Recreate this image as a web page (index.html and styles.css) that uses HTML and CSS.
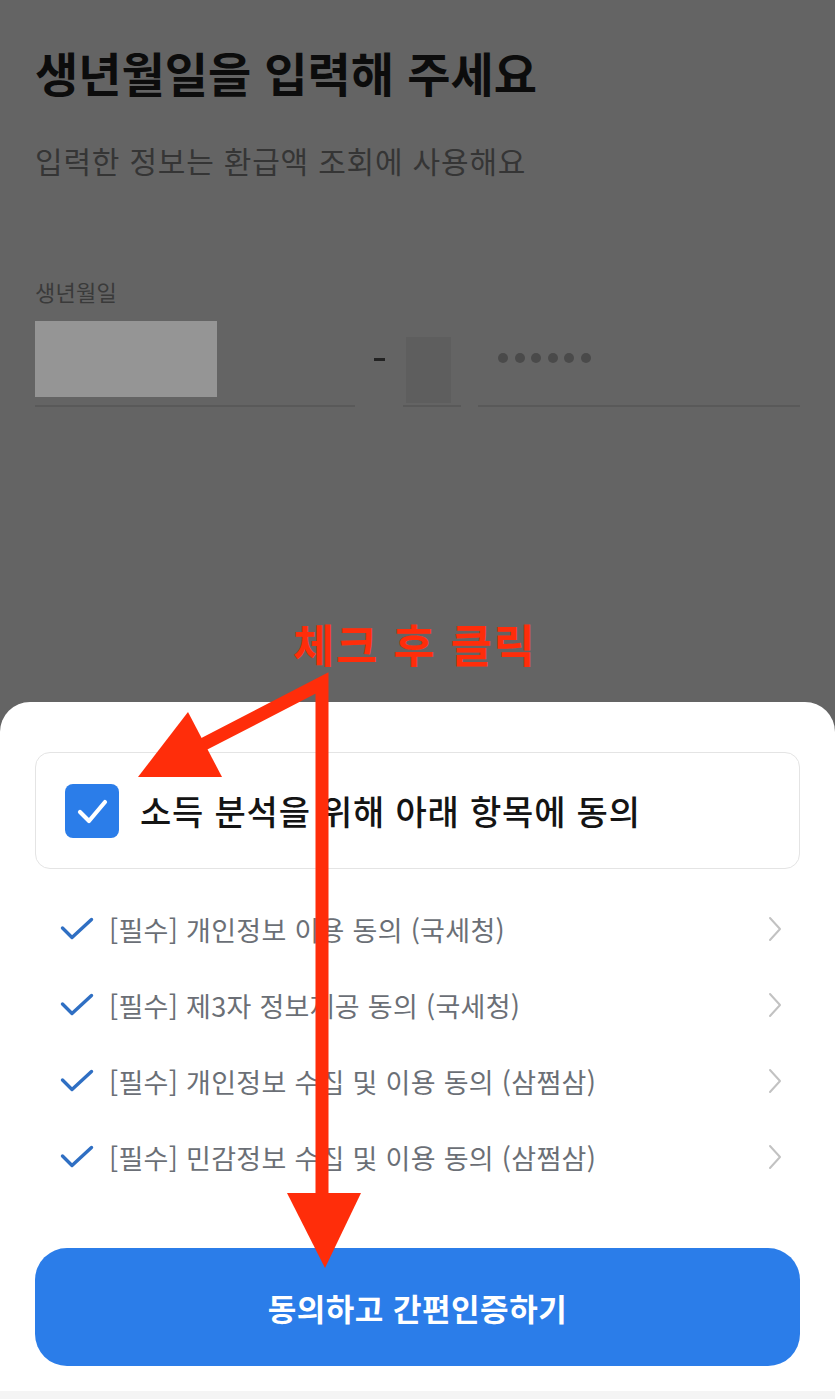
FILE: index.html
```html
<!DOCTYPE html>
<html lang="ko">
<head>
<meta charset="utf-8">
<title>생년월일 입력</title>
<link rel="stylesheet" href="styles.css">
</head>
<body>
<div class="page">
  <section class="top">
    <h1 class="title">생년월일을 입력해 주세요</h1>
    <p class="subtitle">입력한 정보는 환급액 조회에 사용해요</p>
    <div class="label">생년월일</div>
    <div class="field-row">
      <div class="field field-birth"><div class="masked"></div></div>
      <div class="sep"><span class="dash"></span></div>
      <div class="field field-gender"><div class="gender-box"></div></div>
      <div class="field field-rest">
        <div class="dots"><span></span><span></span><span></span><span></span><span></span><span></span></div>
      </div>
    </div>
  </section>

  <section class="sheet">
    <div class="all-agree">
      <span class="checkbox">
        <svg viewBox="0 0 54 54" width="54" height="54"><path d="M15 28 L24 37 L40 18" fill="none" stroke="#fff" stroke-width="4.2" stroke-linecap="round" stroke-linejoin="round"/></svg>
      </span>
      <span class="all-text">소득 분석을 위해 아래 항목에 동의</span>
    </div>
    <ul class="terms">
      <li class="term">
        <svg class="tick" viewBox="0 0 34 24" width="34" height="24"><path d="M2.5 11 L12 20.5 L31.5 2.5" fill="none" stroke="#2f6fc3" stroke-width="3.4" stroke-linecap="round" stroke-linejoin="round"/></svg>
        <span class="term-text">[필수] 개인정보 이용 동의 (국세청)</span>
        <svg class="chev" viewBox="0 0 16 26" width="16" height="26"><path d="M3 2 L13 13 L3 24" fill="none" stroke="#c2c2c2" stroke-width="2" stroke-linecap="round" stroke-linejoin="round"/></svg>
      </li>
      <li class="term">
        <svg class="tick" viewBox="0 0 34 24" width="34" height="24"><path d="M2.5 11 L12 20.5 L31.5 2.5" fill="none" stroke="#2f6fc3" stroke-width="3.4" stroke-linecap="round" stroke-linejoin="round"/></svg>
        <span class="term-text">[필수] 제3자 정보제공 동의 (국세청)</span>
        <svg class="chev" viewBox="0 0 16 26" width="16" height="26"><path d="M3 2 L13 13 L3 24" fill="none" stroke="#c2c2c2" stroke-width="2" stroke-linecap="round" stroke-linejoin="round"/></svg>
      </li>
      <li class="term">
        <svg class="tick" viewBox="0 0 34 24" width="34" height="24"><path d="M2.5 11 L12 20.5 L31.5 2.5" fill="none" stroke="#2f6fc3" stroke-width="3.4" stroke-linecap="round" stroke-linejoin="round"/></svg>
        <span class="term-text">[필수] 개인정보 수집 및 이용 동의 (삼쩜삼)</span>
        <svg class="chev" viewBox="0 0 16 26" width="16" height="26"><path d="M3 2 L13 13 L3 24" fill="none" stroke="#c2c2c2" stroke-width="2" stroke-linecap="round" stroke-linejoin="round"/></svg>
      </li>
      <li class="term">
        <svg class="tick" viewBox="0 0 34 24" width="34" height="24"><path d="M2.5 11 L12 20.5 L31.5 2.5" fill="none" stroke="#2f6fc3" stroke-width="3.4" stroke-linecap="round" stroke-linejoin="round"/></svg>
        <span class="term-text">[필수] 민감정보 수집 및 이용 동의 (삼쩜삼)</span>
        <svg class="chev" viewBox="0 0 16 26" width="16" height="26"><path d="M3 2 L13 13 L3 24" fill="none" stroke="#c2c2c2" stroke-width="2" stroke-linecap="round" stroke-linejoin="round"/></svg>
      </li>
    </ul>
    <button class="cta" type="button">동의하고 간편인증하기</button>
  </section>
  <div class="navbar"></div>

  <div class="note">체크 후 클릭</div>
  <svg class="arrows" viewBox="0 0 835 1399" width="835" height="1399">
    <polyline points="200,746 322,683 322,1200" fill="none" stroke="#ff2d0a" stroke-width="13" stroke-linejoin="miter"/>
    <polygon points="138,777 188,712 222,777" fill="#ff2d0a"/>
    <polygon points="287,1193 361,1193 325,1268" fill="#ff2d0a"/>
  </svg>
</div>
</body>
</html>
```

FILE: styles.css
```css
* { box-sizing: border-box; }

html, body {
  margin: 0;
  padding: 0;
}

body {
  background: #646464;
  font-family: "Noto Sans CJK KR", "Noto Sans", sans-serif;
}

.page {
  position: relative;
  width: 835px;
  height: 1399px;
  display: flex;
  flex-direction: column;
  overflow: hidden;
}

/* ---------- top (dimmed) ---------- */
.top {
  flex: 1;
  padding: 44px 35px 0;
}

.title {
  margin: 0;
  font-size: 47px;
  line-height: 56px;
  font-weight: 700;
  color: #0c0c0c;
  letter-spacing: 0;
}

.subtitle {
  margin: 42px 0 0;
  font-size: 30px;
  line-height: 36px;
  font-weight: 400;
  color: #353535;
  letter-spacing: 0.8px;
}

.label {
  margin-top: 99px;
  font-size: 22px;
  line-height: 28px;
  color: #3a3a3a;
  letter-spacing: 0.3px;
}

.field-row {
  margin-top: 16px;
  display: flex;
  height: 86px;
}

.field {
  border-bottom: 2px solid #595959;
}

.field-birth {
  width: 320px;
}

.masked {
  width: 182px;
  height: 76px;
  background: #959595;
}

.sep {
  width: 48px;
  display: flex;
  justify-content: center;
  padding-top: 37px;
}

.dash {
  width: 11px;
  height: 3px;
  background: #222;
}

.field-gender {
  width: 58px;
  padding: 16px 0 0 3px;
}

.gender-box {
  width: 45px;
  height: 66px;
  background: #5e5e5e;
}

.field-rest {
  flex: 1;
  margin-left: 17px;
  padding: 32px 0 0 20px;
}

.dots {
  display: flex;
  gap: 6.6px;
}

.dots span {
  width: 10px;
  height: 10px;
  border-radius: 50%;
  background: #4a4a4a;
}

/* ---------- bottom sheet ---------- */
.sheet {
  background: #fff;
  border-radius: 30px 30px 0 0;
  padding: 50px 35px 25px;
}

.all-agree {
  height: 117px;
  border: 1.5px solid #e4e4e4;
  border-radius: 15px;
  display: flex;
  align-items: center;
  padding-left: 29px;
  gap: 21px;
}

.checkbox {
  width: 54px;
  height: 54px;
  border-radius: 8px;
  background: #2b7de9;
  display: flex;
}

.all-text {
  font-size: 34px;
  font-weight: 500;
  color: #141414;
  letter-spacing: 0.8px;
}

.terms {
  list-style: none;
  margin: 22px 0 0;
  padding: 0;
}

.term {
  height: 76px;
  display: flex;
  align-items: center;
  padding: 0 17px 0 25px;
}

.tick {
  flex: none;
}

.term-text {
  flex: 1;
  margin-left: 15px;
  font-size: 27px;
  color: #6b6f76;
  letter-spacing: 0.3px;
}

.chev {
  flex: none;
}

.cta {
  display: block;
  width: 100%;
  height: 118px;
  margin-top: 53px;
  border: 0;
  border-radius: 32px;
  background: #2b7de9;
  color: #fff;
  font-family: inherit;
  font-size: 31px;
  font-weight: 700;
  letter-spacing: 0.5px;
}

.navbar {
  height: 8px;
  background: #f4f4f4;
}

/* ---------- annotation overlay ---------- */
.note {
  position: absolute;
  left: 293px;
  top: 619px;
  font-size: 45px;
  line-height: 50px;
  font-weight: 700;
  color: #ff2d0a;
  letter-spacing: 1.6px;
}

.arrows {
  position: absolute;
  left: 0;
  top: 0;
  pointer-events: none;
}
```
